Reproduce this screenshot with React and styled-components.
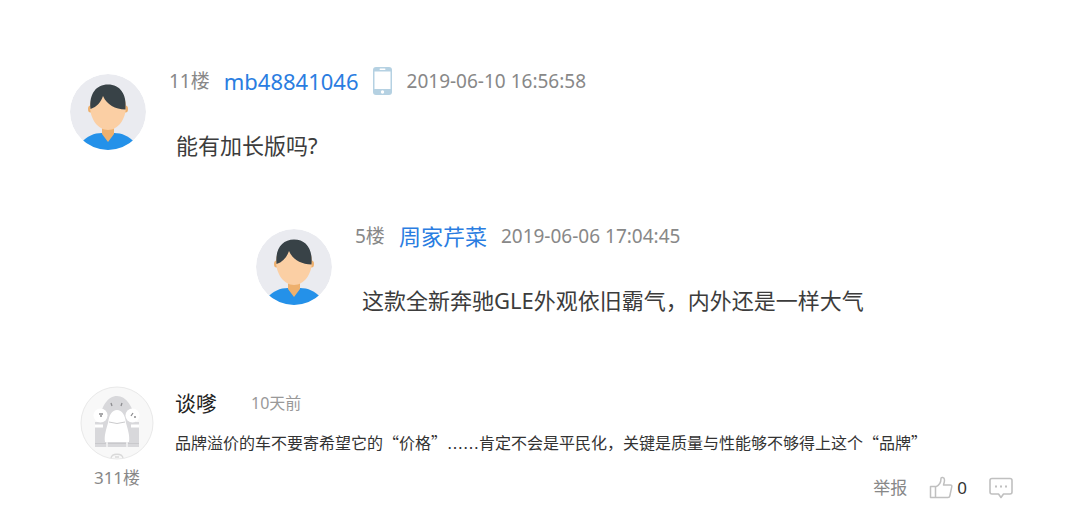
import React from "react";
import styled, { createGlobalStyle } from "styled-components";

const GlobalStyle = createGlobalStyle`
  * {
    box-sizing: border-box;
  }
  body {
    margin: 0;
    background: #ffffff;
    font-family: "Noto Sans", "Noto Sans CJK SC", sans-serif;
  }
`;

const UserAvatar = () => (
  <AvatarSvg viewBox="0 0 76 76" role="img" aria-label="用户头像">
    <defs>
      <clipPath id="face-clip">
        <circle cx="38" cy="38" r="38" />
      </clipPath>
    </defs>
    <g clipPath="url(#face-clip)">
      <circle cx="38" cy="38" r="38" fill="#eaebf0" />
      <path d="M11 69c6-7 13-10 21-10h12c8 0 15 3 21 10v8H11z" fill="#2491e9" />
      <path d="M32 53h12v7l-6 8-6-8z" fill="#eeb06d" />
      <ellipse cx="20.500" cy="35" rx="2.500" ry="3.500" fill="#eeb06d" />
      <ellipse cx="55.500" cy="35" rx="2.500" ry="3.500" fill="#eeb06d" />
      <path d="M20 32c0-9 6-15 18-15s18 6 18 15c0 13-8 24-18 24S20 45 20 32z" fill="#fbcfa4" />
      <path
        d="M20.500 35C19 20 26 10.500 38 10.500S57 20 55.500 35.500C45 35 37 31 33 22c-2 6-6 11-12.500 13z"
        fill="#384247"
      />
    </g>
  </AvatarSvg>
);

const SharkAvatar = () => (
  <AvatarSvg viewBox="0 0 74 74" role="img" aria-label="用户头像">
    <circle cx="37" cy="37" r="36" fill="#f8f8f8" stroke="#e9e9e9" />
    <path d="M15 61V36h4C21 20 28 10 37 10s16 10 19 26h3v25z" fill="#d8d8db" />
    <path d="M15 40h8M51 40h8" stroke="#ffffff" strokeWidth="3" />
    <circle cx="20.500" cy="29.500" r="7" fill="#fff" />
    <circle cx="52.500" cy="29.500" r="7" fill="#fff" />
    <path d="M25 56c-1-6 1-12 3-19 1-8 4-13 9-13s8 5 9 13c2 7 4 13 3 19z" fill="#fff" />
    <path d="M29 36q8 3 16 0" fill="none" stroke="#cbcbcd" strokeWidth="1" />
    <path
      d="M31 17l1 3M42 17l-1 3M19 28h4M20 30h2M53 27l-2 3M54 31h2"
      stroke="#8d8d90"
      strokeWidth="1.300"
      fill="none"
    />
    <path d="M15 57.500h44" stroke="#c9c9cc" strokeWidth="1" />
    <path d="M27 56v5M47 56v5" stroke="#ededee" strokeWidth="2" />
    <path d="M31 72c1-5 11-5 12 0M35 71h4" fill="none" stroke="#d9d9d9" strokeWidth="1.300" />
  </AvatarSvg>
);

const PhoneIcon = () => (
  <svg width="20" height="28" viewBox="0 0 20 28" role="img" aria-label="手机">
    <rect x="0" y="0" width="19" height="28" rx="3" fill="#b5d1e2" />
    <rect x="1.500" y="4.500" width="16" height="17.500" fill="#fff" />
    <rect x="6.500" y="1.500" width="6" height="1.500" rx="0.700" fill="#fff" />
    <circle cx="9.500" cy="25" r="1.700" fill="#fff" />
  </svg>
);

const ThumbIcon = () => (
  <svg width="24" height="24" viewBox="0 0 24 24" fill="none" stroke="#c0c0c0" strokeWidth="1.500" strokeLinejoin="round">
    <path d="M1.500 10.500h5v11h-5zM6.500 11c4-1.500 5.500-4 5.500-8.500 0-1.500 3.500-1.500 3.500 1.500 0 2-.500 3.500-1 5h7c1 0 1.500.700 1.300 1.700l-2 9.300c-.200 1-.800 1.500-1.800 1.500H6.500" />
  </svg>
);

const ReplyIcon = () => (
  <svg width="24" height="24" viewBox="0 0 24 24" fill="none" stroke="#c0c0c0" strokeWidth="1.600" strokeLinejoin="round">
    <path d="M3 2.500h18c1.200 0 2 .800 2 2v11.500c0 1.200-.800 2-2 2h-6.500L12 21.500 9.500 18H3c-1.200 0-2-.800-2-2V4.500c0-1.200.800-2 2-2z" />
    <path d="M6 10.500h2M11 10.500h2M16 10.500h2" strokeWidth="2" />
  </svg>
);

const floors = [
  { floor: "11楼", name: "mb48841046", time: "2019-06-10 16:56:58", text: "能有加长版吗?", mobile: true },
  { floor: "5楼", name: "周家芹菜", time: "2019-06-06 17:04:45", text: "这款全新奔驰GLE外观依旧霸气，内外还是一样大气", nested: true },
];

const FloorComment = ({ floor, name, time, text, mobile, nested }) => (
  <Comment $nested={nested}>
    <AvatarBox>
      <UserAvatar />
    </AvatarBox>
    <div>
      <Header>
        <Meta>{floor}</Meta>
        <UserLink href="#">{name}</UserLink>
        {mobile && <PhoneIcon />}
        <Meta as="time">{time}</Meta>
      </Header>
      <Text>{text}</Text>
    </div>
  </Comment>
);

const App = () => {
  return (
    <>
      <GlobalStyle />
      <Wrap lang="zh-CN">
        {floors.map((item) => (
          <FloorComment key={item.floor} {...item} />
        ))}
        <Post>
          <Side>
            <SharkAvatar />
            <Floor>311楼</Floor>
          </Side>
          <PostBody>
            <PostHeader>
              <Author>谈嗲</Author>
              <Ago>10天前</Ago>
            </PostHeader>
            <PostText>
              品牌溢价的车不要寄希望它的“价格”<Dots>……</Dots>肯定不会是平民化，关键是质量与性能够不够得上这个“品牌”
            </PostText>
            <Actions>
              <ActionButton>举报</ActionButton>
              <ActionButton $dark aria-label="点赞 0">
                <ThumbIcon />0
              </ActionButton>
              <ActionButton aria-label="回复">
                <ReplyIcon />
              </ActionButton>
            </Actions>
          </PostBody>
        </Post>
      </Wrap>
    </>
  );
};

const Wrap = styled.main`
  display: flex;
  flex-direction: column;
  padding: 67px 67px 32px 70px;
`;

const Comment = styled.article`
  display: flex;
  gap: 23px;
  margin-bottom: 61px;
  padding-left: ${({ $nested }) => ($nested ? "186px" : "0")};
`;

const AvatarBox = styled.div`
  flex: none;
  width: 76px;
  padding-top: 7px;
`;

const AvatarSvg = styled.svg`
  display: block;
  width: 100%;
`;

const Header = styled.header`
  display: flex;
  align-items: center;
  gap: 14px;
  height: 28px;
`;

const Meta = styled.span`
  font-size: 19px;
  line-height: 28px;
  color: #888888;
`;

const UserLink = styled.a`
  font-size: 22px;
  line-height: 28px;
  color: #2a7de1;
  text-decoration: none;
`;

const Text = styled.p`
  margin: 34px 0 0;
  padding-left: 7px;
  font-size: 22px;
  line-height: 32px;
  color: #3c3c3c;
`;

const Post = styled.article`
  display: flex;
  gap: 21px;
  margin-top: 9px;
  padding-left: 10px;
`;

const Side = styled.div`
  flex: none;
  width: 74px;
`;

const Floor = styled.div`
  margin-top: 6px;
  font-size: 17px;
  line-height: 24px;
  text-align: center;
  color: #888888;
`;

const PostBody = styled.div`
  flex: 1;
`;

const PostHeader = styled.header`
  display: flex;
  align-items: center;
  gap: 34px;
  padding-top: 2px;
`;

const Author = styled.span`
  font-size: 21px;
  line-height: 30px;
  color: #222222;
`;

const Ago = styled.time`
  font-size: 16px;
  line-height: 30px;
  color: #999999;
`;

const PostText = styled.p`
  margin: 12px 0 0;
  font-family: "Noto Sans CJK SC", sans-serif;
  font-size: 16px;
  line-height: 24px;
  color: #333333;
`;

// keeps the ellipsis on the baseline
const Dots = styled.span`
  font-family: "DejaVu Sans", sans-serif;
`;

const Actions = styled.div`
  display: flex;
  justify-content: flex-end;
  align-items: center;
  gap: 22px;
  margin-top: 20px;
`;

const ActionButton = styled.button`
  display: flex;
  align-items: center;
  gap: 4px;
  padding: 0;
  border: 0;
  background: none;
  font-family: inherit;
  font-size: 17px;
  line-height: 24px;
  color: ${({ $dark }) => ($dark ? "#333333" : "#888888")};
  cursor: pointer;
`;

export default App;
